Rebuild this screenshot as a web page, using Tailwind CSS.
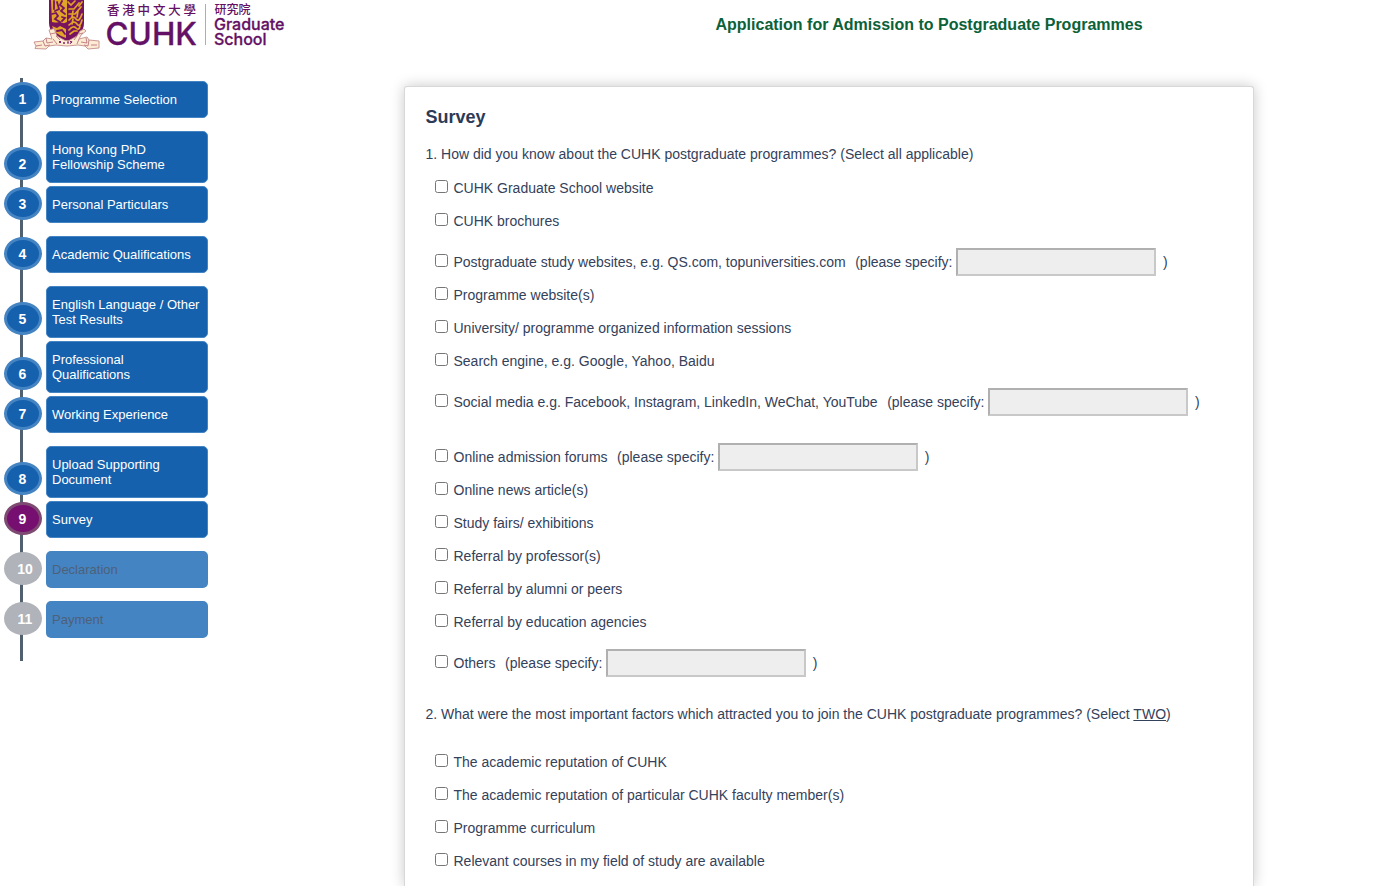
<!DOCTYPE html>
<html lang="en">
<head>
<meta charset="utf-8">
<title>Application for Admission to Postgraduate Programmes</title>
<script src="https://cdn.jsdelivr.net/npm/@tailwindcss/browser@4"></script>
</head>
<body class="h-[886px] overflow-hidden bg-white font-['Liberation_Sans',Arial,sans-serif] text-[14px] text-[#34415a]">
<header class="flex h-[78px] items-start">
  <svg class="ml-[30px] h-[56px] w-[260px] shrink-0" viewBox="30 0 260 56" role="img" aria-label="CUHK Graduate School">
    <path d="M49 0H84V23Q84 35 67 41Q49 35 49 23Z" fill="#78145f"/>
    <path d="M51 0H67V22L62 24L52 22Z" fill="#e0a526"/>
    <path d="M52 26L57 28L60 26L66 29V38Q54 34 52 26Z" fill="#e0a526"/>
    <path d="M54 1V9M57 2L59 9L55 11M62 1L60 5L64 8L61 11L65 14M52 14L56 13L58 16L55 19L60 22M62 17L65 18L62 21M54 24L60 23L66 25M57 31L62 30L65 34" fill="none" stroke="#78145f" stroke-width="1.8" stroke-linecap="round"/>
    <path d="M68 2L71 5L75 1M69 9L74 9L79 3M69 14L75 14L81 7M69 20Q73 15 76 19T82 14M69 25Q74 20 77 24T82 20M69 30Q73 25 76 28T80 26M70 34L74 31L77 31M82 2L79 6M73 11L72 17M78 11L77 17M73 19L72 24" fill="none" stroke="#e0a526" stroke-width="1.7" stroke-linecap="round"/>
    <path d="M49 30L54 28.500L57 36L65 40.500H69L77 36L80 31L84 29L86 31L81 35L79 39L87 37L89 40L99 41V48L88 49L85 46L78 45L67 46L56 45L49 46L46 49L35 48.500L36 46L34 42L43 41L46 38L52 39Z" fill="#fdebd3" stroke="#c48d8b" stroke-width=".9" stroke-linejoin="round"/>
    <path d="M43 41L45 46L50 45M46 38L47 43L53 42M53 39L57 44M56 36L60 40M89 40L88 46L84 45M86 38L87 43L81 42M79 39L77 44M77 36L74 40M36 46L42 45M91 45H97M50 34L55 33M79 34L83 33" fill="none" stroke="#bb7580" stroke-width=".9"/>
    <path d="M59 41l2 2m0-2l-2 2m5-1v2m-1-1h2m3-1v2m-1-2h2m3-1l-2 3m0-3l2 2" fill="none" stroke="#78145f" stroke-width=".9"/>
    <text x="107" y="14.500" font-family="Noto Sans CJK TC,sans-serif" font-size="12.500" font-weight="500" fill="#641064" textLength="89">香港中文大學</text>
    <text x="105.500" y="45" font-family="Inter,sans-serif" font-size="31.500" font-weight="500" fill="#641064" stroke="#641064" stroke-width=".3" textLength="91.500" lengthAdjust="spacingAndGlyphs">CUHK</text>
    <path d="M205.500 4V45" stroke="#bba4bd"/>
    <text x="214.500" y="13.500" font-family="Noto Sans CJK TC,sans-serif" font-size="12" font-weight="500" fill="#641064">研究院</text>
    <text x="214" y="29.500" font-family="Inter,sans-serif" font-size="16" font-weight="500" fill="#641064" stroke="#641064" stroke-width=".3" textLength="70.500" lengthAdjust="spacingAndGlyphs">Graduate</text>
    <text x="214" y="45" font-family="Inter,sans-serif" font-size="16" font-weight="500" fill="#641064" stroke="#641064" stroke-width=".3" textLength="52.500" lengthAdjust="spacingAndGlyphs">School</text>
  </svg>
  <h1 class="ml-[425.5px] mt-[13px] whitespace-nowrap text-[16px] leading-6 font-bold text-[#0b6138]">Application for Admission to Postgraduate Programmes</h1>
</header>
<div class="flex items-start">
  <nav class="relative h-[583px] w-[405px] shrink-0 pl-1 pt-[3px] text-[13px] leading-[15px] text-white">
    <div class="absolute left-5 top-0 h-[583px] w-[3px] bg-[#51606f]"></div>
    <ol class="relative">
      <li class="flex h-[50px] items-start gap-1"><span class="mt-px flex h-[33px] w-[38px] items-center justify-center rounded-[50%] border-3 border-[#4584c3] bg-[#1661ad] pt-px pr-px text-[14px] font-bold">1</span><a class="flex h-[37px] w-[162px] items-center rounded-[5px] border border-[#4584c3] bg-[#1661ad] px-[5px]">Programme Selection</a></li>
      <li class="flex h-[55px] items-start gap-1"><span class="mt-4 flex h-[33px] w-[38px] items-center justify-center rounded-[50%] border-3 border-[#4584c3] bg-[#1661ad] pt-px pr-px text-[14px] font-bold">2</span><a class="flex h-[52px] w-[162px] items-center rounded-[5px] border border-[#4584c3] bg-[#1661ad] px-[5px]">Hong Kong PhD<br>Fellowship Scheme</a></li>
      <li class="flex h-[50px] items-start gap-1"><span class="mt-px flex h-[33px] w-[38px] items-center justify-center rounded-[50%] border-3 border-[#4584c3] bg-[#1661ad] pt-px pr-px text-[14px] font-bold">3</span><a class="flex h-[37px] w-[162px] items-center rounded-[5px] border border-[#4584c3] bg-[#1661ad] px-[5px]">Personal Particulars</a></li>
      <li class="flex h-[50px] items-start gap-1"><span class="mt-px flex h-[33px] w-[38px] items-center justify-center rounded-[50%] border-3 border-[#4584c3] bg-[#1661ad] pt-px pr-px text-[14px] font-bold">4</span><a class="flex h-[37px] w-[162px] items-center rounded-[5px] border border-[#4584c3] bg-[#1661ad] px-[5px]">Academic Qualifications</a></li>
      <li class="flex h-[55px] items-start gap-1"><span class="mt-4 flex h-[33px] w-[38px] items-center justify-center rounded-[50%] border-3 border-[#4584c3] bg-[#1661ad] pt-px pr-px text-[14px] font-bold">5</span><a class="flex h-[52px] w-[162px] items-center whitespace-nowrap rounded-[5px] border border-[#4584c3] bg-[#1661ad] px-[5px]">English Language / Other<br>Test Results</a></li>
      <li class="flex h-[55px] items-start gap-1"><span class="mt-4 flex h-[33px] w-[38px] items-center justify-center rounded-[50%] border-3 border-[#4584c3] bg-[#1661ad] pt-px pr-px text-[14px] font-bold">6</span><a class="flex h-[52px] w-[162px] items-center rounded-[5px] border border-[#4584c3] bg-[#1661ad] px-[5px]">Professional<br>Qualifications</a></li>
      <li class="flex h-[50px] items-start gap-1"><span class="mt-px flex h-[33px] w-[38px] items-center justify-center rounded-[50%] border-3 border-[#4584c3] bg-[#1661ad] pt-px pr-px text-[14px] font-bold">7</span><a class="flex h-[37px] w-[162px] items-center rounded-[5px] border border-[#4584c3] bg-[#1661ad] px-[5px]">Working Experience</a></li>
      <li class="flex h-[55px] items-start gap-1"><span class="mt-4 flex h-[33px] w-[38px] items-center justify-center rounded-[50%] border-3 border-[#4584c3] bg-[#1661ad] pt-px pr-px text-[14px] font-bold">8</span><a class="flex h-[52px] w-[162px] items-center rounded-[5px] border border-[#4584c3] bg-[#1661ad] px-[5px]">Upload Supporting<br>Document</a></li>
      <li class="flex h-[50px] items-start gap-1"><span class="mt-px flex h-[33px] w-[38px] items-center justify-center rounded-[50%] border-3 border-[#7d4a72] bg-[#760f70] pt-px pr-px text-[14px] font-bold">9</span><a class="flex h-[37px] w-[162px] items-center rounded-[5px] border border-[#4584c3] bg-[#1661ad] px-[5px]">Survey</a></li>
      <li class="flex h-[50px] items-start gap-1"><span class="mt-px flex h-[33px] w-[38px] items-center justify-center rounded-[50%] bg-[#b0b3b9] pt-px pl-1 text-[14px] font-bold">10</span><a class="flex h-[37px] w-[162px] items-center rounded-[5px] bg-[#4584c3] px-1.5 text-[#4d6178]">Declaration</a></li>
      <li class="flex h-[50px] items-start gap-1"><span class="mt-px flex h-[33px] w-[38px] items-center justify-center rounded-[50%] bg-[#b0b3b9] pt-px pl-1 text-[14px] font-bold">11</span><a class="flex h-[37px] w-[162px] items-center rounded-[5px] bg-[#4584c3] px-1.5 text-[#4d6178]">Payment</a></li>
    </ol>
  </nav>
  <main class="-ml-px mt-2 h-[800px] w-[850px] shrink-0 whitespace-nowrap rounded-t-[3px] border border-b-0 border-[#d8d8d8] bg-white px-[20.5px] shadow-[0_0_14px_rgba(0,0,0,0.22)]">
    <h2 class="mt-[18px] text-[18px] leading-6 font-bold text-[#2d3a57]">Survey</h2>
    <p class="mt-[9px] h-[33px] leading-[33px]">1. How did you know about the CUHK postgraduate programmes? (Select all applicable)</p>
    <div class="pl-[9.5px] leading-[33px]">
      <label class="flex h-[33px] items-center gap-[5.5px] pt-0.5"><input type="checkbox" class="mb-1 size-[13px]">CUHK Graduate School website</label>
      <label class="flex h-[33px] items-center gap-[5.5px] pt-0.5"><input type="checkbox" class="mb-1 size-[13px]">CUHK brochures</label>
      <div class="flex h-[41px] items-center pt-2.5"><label class="flex items-center gap-[5.5px]"><input type="checkbox" class="mb-1 size-[13px]">Postgraduate study websites, e.g. QS.com, topuniversities.com</label><span class="ml-[9.5px]">(please specify:</span><input disabled class="-mt-px ml-1 h-7 w-[200px] border-2 border-t-[#b0b0b0] border-l-[#b0b0b0] border-r-[#c8c8c8] border-b-[#c8c8c8] bg-[#eee]"><span class="ml-[6.5px]">)</span></div>
      <label class="flex h-[33px] items-center gap-[5.5px] pt-0.5"><input type="checkbox" class="mb-1 size-[13px]">Programme website(s)</label>
      <label class="flex h-[33px] items-center gap-[5.5px] pt-0.5"><input type="checkbox" class="mb-1 size-[13px]">University/ programme organized information sessions</label>
      <label class="flex h-[33px] items-center gap-[5.5px] pt-0.5"><input type="checkbox" class="mb-1 size-[13px]">Search engine, e.g. Google, Yahoo, Baidu</label>
      <div class="flex h-[41px] items-center pt-2.5"><label class="flex items-center gap-[5.5px]"><input type="checkbox" class="mb-1 size-[13px]">Social media e.g. Facebook, Instagram, LinkedIn, WeChat, YouTube</label><span class="ml-[9.5px]">(please specify:</span><input disabled class="-mt-px ml-1 h-7 w-[200px] border-2 border-t-[#b0b0b0] border-l-[#b0b0b0] border-r-[#c8c8c8] border-b-[#c8c8c8] bg-[#eee]"><span class="ml-[6.5px]">)</span></div>
      <div class="flex h-[55px] items-center pt-6"><label class="flex items-center gap-[5.5px]"><input type="checkbox" class="mb-1 size-[13px]">Online admission forums</label><span class="ml-[9.5px]">(please specify:</span><input disabled class="-mt-px ml-1 h-7 w-[200px] border-2 border-t-[#b0b0b0] border-l-[#b0b0b0] border-r-[#c8c8c8] border-b-[#c8c8c8] bg-[#eee]"><span class="ml-[6.5px]">)</span></div>
      <label class="flex h-[33px] items-center gap-[5.5px] pt-0.5"><input type="checkbox" class="mb-1 size-[13px]">Online news article(s)</label>
      <label class="flex h-[33px] items-center gap-[5.5px] pt-0.5"><input type="checkbox" class="mb-1 size-[13px]">Study fairs/ exhibitions</label>
      <label class="flex h-[33px] items-center gap-[5.5px] pt-0.5"><input type="checkbox" class="mb-1 size-[13px]">Referral by professor(s)</label>
      <label class="flex h-[33px] items-center gap-[5.5px] pt-0.5"><input type="checkbox" class="mb-1 size-[13px]">Referral by alumni or peers</label>
      <label class="flex h-[33px] items-center gap-[5.5px] pt-0.5"><input type="checkbox" class="mb-1 size-[13px]">Referral by education agencies</label>
      <div class="flex h-[41px] items-center pt-2.5"><label class="flex items-center gap-[5.5px]"><input type="checkbox" class="mb-1 size-[13px]">Others</label><span class="ml-[9.5px]">(please specify:</span><input disabled class="-mt-px ml-1 h-7 w-[200px] border-2 border-t-[#b0b0b0] border-l-[#b0b0b0] border-r-[#c8c8c8] border-b-[#c8c8c8] bg-[#eee]"><span class="ml-[6.5px]">)</span></div>
    </div>
    <p class="mt-[19px] h-[33px] leading-[33px]">2. What were the most important factors which attracted you to join the CUHK postgraduate programmes? (Select <u>TWO</u>)</p>
    <div class="mt-[14px] pl-[9.5px] leading-[33px]">
      <label class="flex h-[33px] items-center gap-[5.5px] pt-0.5"><input type="checkbox" class="mb-1 size-[13px]">The academic reputation of CUHK</label>
      <label class="flex h-[33px] items-center gap-[5.5px] pt-0.5"><input type="checkbox" class="mb-1 size-[13px]">The academic reputation of particular CUHK faculty member(s)</label>
      <label class="flex h-[33px] items-center gap-[5.5px] pt-0.5"><input type="checkbox" class="mb-1 size-[13px]">Programme curriculum</label>
      <label class="flex h-[33px] items-center gap-[5.5px] pt-0.5"><input type="checkbox" class="mb-1 size-[13px]">Relevant courses in my field of study are available</label>
    </div>
  </main>
</div>
</body>
</html>
